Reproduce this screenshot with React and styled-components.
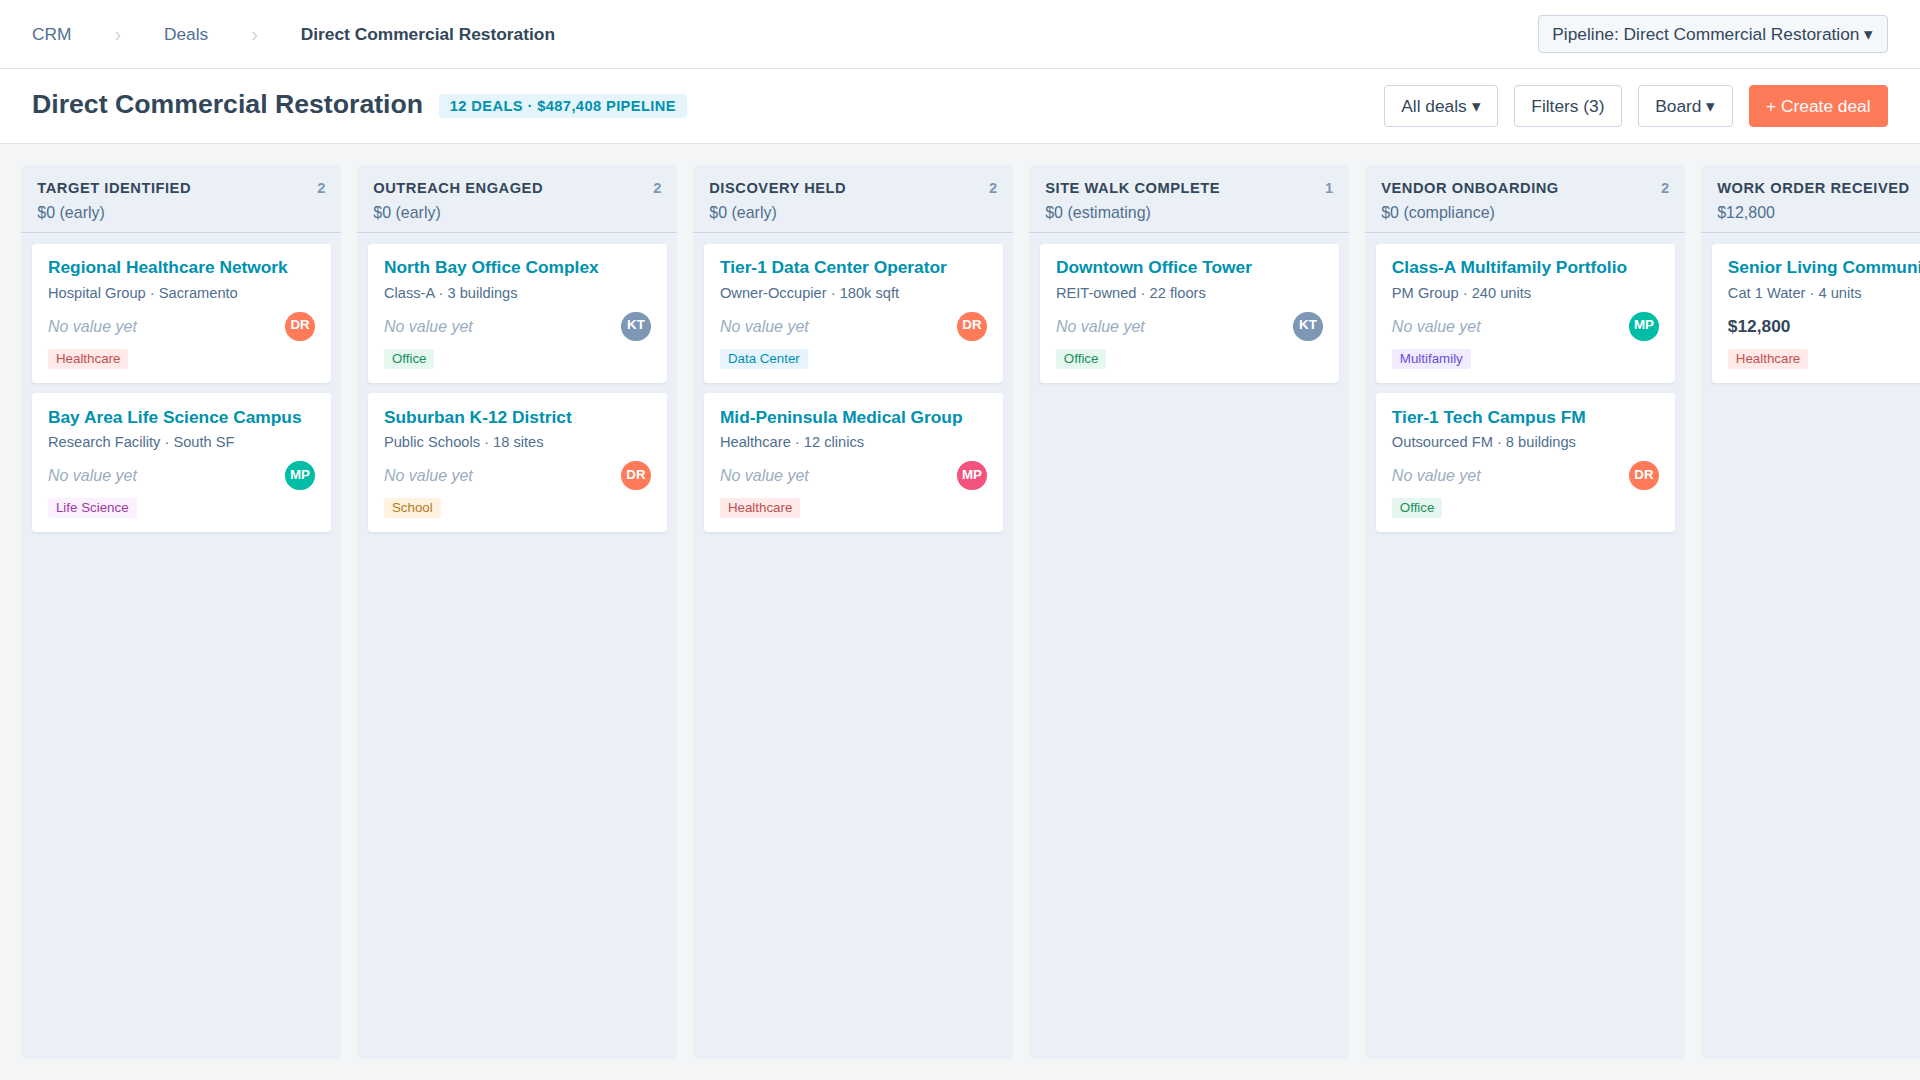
import React from "react";
import styled, { createGlobalStyle } from "styled-components";

const Global = createGlobalStyle`
  html, body { margin: 0; padding: 0; height: 100%; }
  body { font-family: "Liberation Sans", Arial, sans-serif; background: #f4f5f7; color: #33475b; overflow: hidden; }
  * { box-sizing: border-box; }
`;

/* The design is 1440x810, shown at a 4/3 page zoom. */
const Page = styled.div`
  zoom: 1.333333; width: 1440px; height: 810px; display: flex; flex-direction: column; overflow: hidden;
`;
const TopBar = styled.header`
  height: 52px; flex: none; display: flex; align-items: center; justify-content: space-between;
  padding: 0 24px; background: #fff; border-bottom: 1px solid #dfe3eb;
`;
const Crumbs = styled.nav`display: flex; align-items: center; gap: 32.2px; font-size: 13px;`;
const Crumb = styled.span`color: ${p => (p.$current ? "#33475b" : "#516f90")}; font-weight: ${p => (p.$current ? 700 : 400)};`;
const Sep = styled.span`color: #cbd6e2; font-size: 15px; line-height: 15px;`;
const PipelineSelect = styled.button`
  font: 13px "Liberation Sans", Arial, sans-serif; color: #33475b; height: 29px; padding: 0 10.3px;
  background: #f5f8fa; border: 1px solid #cbd6e2; border-radius: 3px;
`;
const TitleBar = styled.div`
  height: 56px; flex: none; display: flex; align-items: center; justify-content: space-between;
  padding: 0 24px; background: #fff; border-bottom: 1px solid #dfe3eb;
`;
const TitleGroup = styled.div`display: flex; align-items: center; gap: 12px;`;
const Title = styled.h1`margin: 0; padding-bottom: 2px; font-size: 20px; font-weight: 700; color: #33475b;`;
const Badge = styled.span`
  background: #e5f5fb; color: #0091ae; font-size: 11px; font-weight: 700; letter-spacing: 0.3px;
  padding: 3px 8px; border-radius: 3px; text-transform: uppercase;
`;
const Actions = styled.div`display: flex; align-items: center; gap: 12px;`;
const Button = styled.button`
  font: 13px "Liberation Sans", Arial, sans-serif; height: 32px; padding: 0 12.3px; border-radius: 3px;
  background: ${p => (p.$primary ? "#ff7a59" : "#fff")};
  color: ${p => (p.$primary ? "#fff" : "#33475b")};
  border: 1px solid ${p => (p.$primary ? "#ff7a59" : "#cbd6e2")};
`;
const Board = styled.main`
  flex: 1; min-height: 0; display: flex; gap: 12px; padding: 16px; overflow: hidden;
`;
const Column = styled.section`
  flex: 0 0 240px; display: flex; flex-direction: column; background: #eaf0f6; border-radius: 4px;
`;
const ColumnHead = styled.div`
  height: 51px; flex: none; padding: 11px 12px 0; border-bottom: 1px solid #cbd6e2;
`;
const ColumnTop = styled.div`display: flex; justify-content: space-between; align-items: center;`;
const ColumnName = styled.span`font-size: 11px; font-weight: 700; letter-spacing: 0.4px; color: #33475b; white-space: nowrap;`;
const ColumnCount = styled.span`font-size: 11px; font-weight: 700; color: #7c98b6;`;
const ColumnSum = styled.div`margin-top: 6px; font-size: 12px; color: #516f90;`;
const CardList = styled.div`display: flex; flex-direction: column; gap: 8px; padding: 8px;`;
const Card = styled.article`
  height: 104px; padding: 10px 12px; background: #fff; border-radius: 3px; box-shadow: 0 1px 2px rgba(0,0,0,0.05);
`;
const CardTitle = styled.div`font-size: 13px; font-weight: 700; color: #0091ae; white-space: nowrap;`;
const CardMeta = styled.div`margin-top: 5px; font-size: 11px; color: #516f90; white-space: nowrap;`;
const CardRow = styled.div`margin-top: 8px; display: flex; align-items: center; justify-content: space-between; height: 22px;`;
const NoValue = styled.span`padding-top: 1px; font-size: 12px; font-style: italic; color: #99acc2;`;
const Amount = styled.span`font-size: 13px; font-weight: 700; color: #33475b;`;
const Avatar = styled.span`
  width: 22px; height: 22px; border-radius: 50%; display: flex; align-items: center; justify-content: center;
  padding-bottom: 2px; background: ${p => p.$bg}; color: #fff; font-size: 10px; font-weight: 700; flex: none;
`;
const Tag = styled.span`
  display: block; width: fit-content; margin-top: 6px; padding: 2px 6px; line-height: 11px; border-radius: 2px; font-size: 10px;
  background: ${p => p.$bg}; color: ${p => p.$fg};
`;

const people = { DR: "#ff7a59", KT: "#7c98b6", MP: "#00bda5", MP2: "#f2547d" };
const tags = {
  Healthcare: ["#ffe9e9", "#c0504d"],
  "Life Science": ["#faf0fe", "#9b3d9e"],
  Office: ["#e6f7f0", "#1a8f5a"],
  School: ["#fff3e0", "#b7791f"],
  "Data Center": ["#e8f4fd", "#0091ae"],
  Multifamily: ["#f0ebff", "#6b4fd8"],
};

const columns = [
  { name: "Target Identified", count: 2, sum: "$0 (early)", cards: [
    { t: "Regional Healthcare Network", m: "Hospital Group · Sacramento", p: "DR", tag: "Healthcare" },
    { t: "Bay Area Life Science Campus", m: "Research Facility · South SF", p: "MP", tag: "Life Science" },
  ]},
  { name: "Outreach Engaged", count: 2, sum: "$0 (early)", cards: [
    { t: "North Bay Office Complex", m: "Class-A · 3 buildings", p: "KT", tag: "Office" },
    { t: "Suburban K-12 District", m: "Public Schools · 18 sites", p: "DR", tag: "School" },
  ]},
  { name: "Discovery Held", count: 2, sum: "$0 (early)", cards: [
    { t: "Tier-1 Data Center Operator", m: "Owner-Occupier · 180k sqft", p: "DR", tag: "Data Center" },
    { t: "Mid-Peninsula Medical Group", m: "Healthcare · 12 clinics", p: "MP2", tag: "Healthcare" },
  ]},
  { name: "Site Walk Complete", count: 1, sum: "$0 (estimating)", cards: [
    { t: "Downtown Office Tower", m: "REIT-owned · 22 floors", p: "KT", tag: "Office" },
  ]},
  { name: "Vendor Onboarding", count: 2, sum: "$0 (compliance)", cards: [
    { t: "Class-A Multifamily Portfolio", m: "PM Group · 240 units", p: "MP", tag: "Multifamily" },
    { t: "Tier-1 Tech Campus FM", m: "Outsourced FM · 8 buildings", p: "DR", tag: "Office" },
  ]},
  { name: "Work Order Received", count: 1, sum: "$12,800", cards: [
    { t: "Senior Living Community", m: "Cat 1 Water · 4 units", amount: "$12,800", p: "DR", tag: "Healthcare" },
  ]},
];

export default function App() {
  return (
    <Page>
      <Global />
      <TopBar>
        <Crumbs>
          <Crumb>CRM</Crumb><Sep>›</Sep><Crumb>Deals</Crumb><Sep>›</Sep><Crumb $current>Direct Commercial Restoration</Crumb>
        </Crumbs>
        <PipelineSelect>Pipeline: Direct Commercial Restoration ▾</PipelineSelect>
      </TopBar>
      <TitleBar>
        <TitleGroup>
          <Title>Direct Commercial Restoration</Title>
          <Badge>12 deals · $487,408 pipeline</Badge>
        </TitleGroup>
        <Actions>
          <Button>All deals ▾</Button>
          <Button>Filters (3)</Button>
          <Button>Board ▾</Button>
          <Button $primary>+ Create deal</Button>
        </Actions>
      </TitleBar>
      <Board>
        {columns.map(c => (
          <Column key={c.name}>
            <ColumnHead>
              <ColumnTop>
                <ColumnName>{c.name.toUpperCase()}</ColumnName>
                <ColumnCount>{c.count}</ColumnCount>
              </ColumnTop>
              <ColumnSum>{c.sum}</ColumnSum>
            </ColumnHead>
            <CardList>
              {c.cards.map(k => (
                <Card key={k.t}>
                  <CardTitle>{k.t}</CardTitle>
                  <CardMeta>{k.m}</CardMeta>
                  <CardRow>
                    {k.amount ? <Amount>{k.amount}</Amount> : <NoValue>No value yet</NoValue>}
                    <Avatar $bg={people[k.p]}>{k.p.slice(0, 2)}</Avatar>
                  </CardRow>
                  <Tag $bg={tags[k.tag][0]} $fg={tags[k.tag][1]}>{k.tag}</Tag>
                </Card>
              ))}
            </CardList>
          </Column>
        ))}
      </Board>
    </Page>
  );
}
